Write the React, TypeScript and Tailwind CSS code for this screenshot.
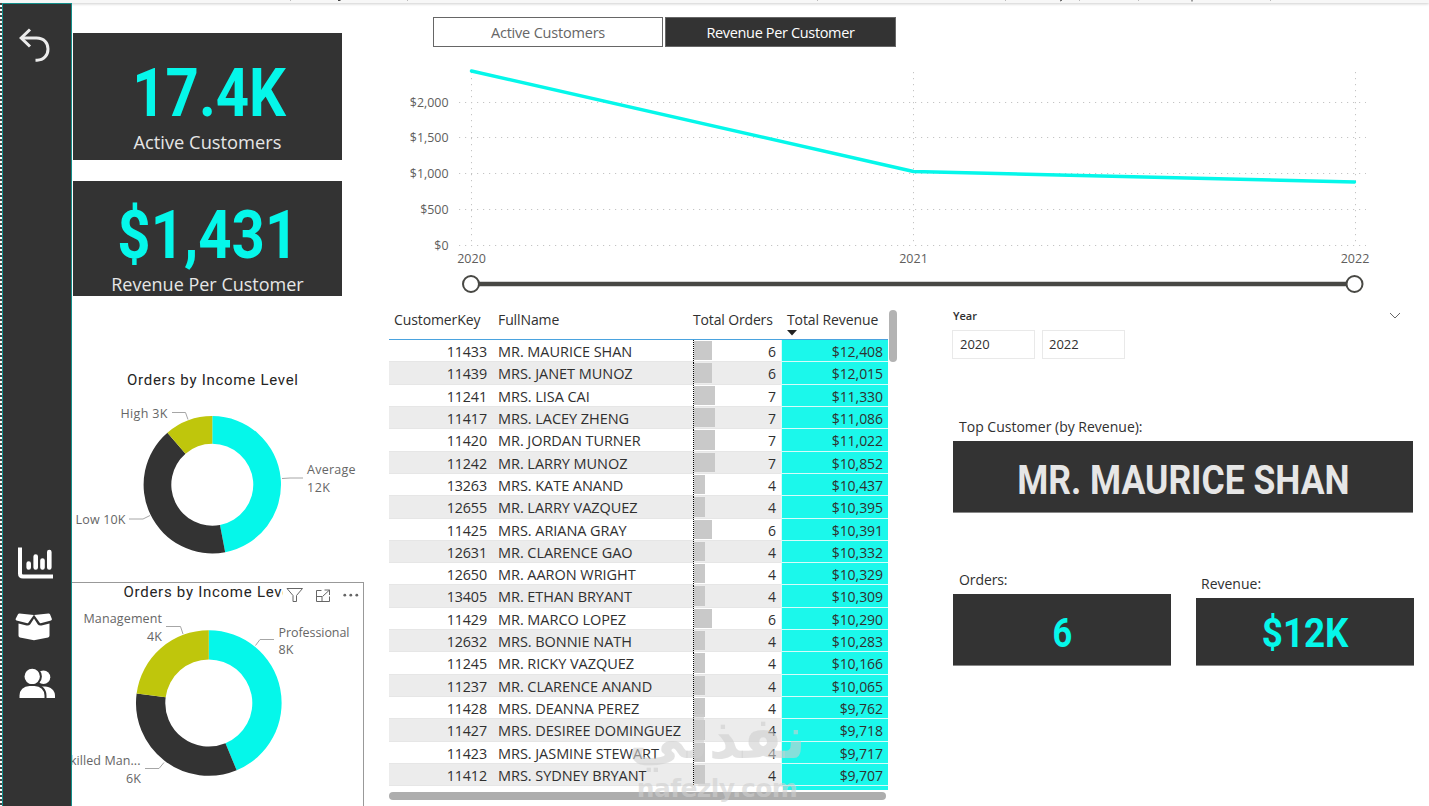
type Slice = { from: number; to: number; color: string };

const customers: [string, string, number, string][] = [
  ['11433', 'MR. MAURICE SHAN', 6, '$12,408'],
  ['11439', 'MRS. JANET MUNOZ', 6, '$12,015'],
  ['11241', 'MRS. LISA CAI', 7, '$11,330'],
  ['11417', 'MRS. LACEY ZHENG', 7, '$11,086'],
  ['11420', 'MR. JORDAN TURNER', 7, '$11,022'],
  ['11242', 'MR. LARRY MUNOZ', 7, '$10,852'],
  ['13263', 'MRS. KATE ANAND', 4, '$10,437'],
  ['12655', 'MR. LARRY VAZQUEZ', 4, '$10,395'],
  ['11425', 'MRS. ARIANA GRAY', 6, '$10,391'],
  ['12631', 'MR. CLARENCE GAO', 4, '$10,332'],
  ['12650', 'MR. AARON WRIGHT', 4, '$10,329'],
  ['13405', 'MR. ETHAN BRYANT', 4, '$10,309'],
  ['11429', 'MR. MARCO LOPEZ', 6, '$10,290'],
  ['12632', 'MRS. BONNIE NATH', 4, '$10,283'],
  ['11245', 'MR. RICKY VAZQUEZ', 4, '$10,166'],
  ['11237', 'MR. CLARENCE ANAND', 4, '$10,065'],
  ['11428', 'MRS. DEANNA PEREZ', 4, '$9,762'],
  ['11427', 'MRS. DESIREE DOMINGUEZ', 4, '$9,718'],
  ['11423', 'MRS. JASMINE STEWART', 4, '$9,717'],
  ['11412', 'MRS. SYDNEY BRYANT', 4, '$9,707'],
];

const barWidths: Record<number, string> = {
  4: 'w-[11px]',
  6: 'w-[18px]',
  7: 'w-[21px]',
};

const incomeSlices: Slice[] = [
  { from: 0, to: 169.2, color: '#05f7ea' },
  { from: 169.2, to: 319.2, color: '#333333' },
  { from: 319.2, to: 360, color: '#bfc60c' },
];

const occupationSlices: Slice[] = [
  { from: 0, to: 157.5, color: '#05f7ea' },
  { from: 157.5, to: 277.5, color: '#333333' },
  { from: 277.5, to: 360, color: '#bfc60c' },
];

function point(cx: number, cy: number, r: number, deg: number) {
  const a = (deg * Math.PI) / 180;
  return `${(cx + r * Math.sin(a)).toFixed(2)} ${(cy - r * Math.cos(a)).toFixed(2)}`;
}

function Donut({ cx, cy, r, hole, slices }: { cx: number; cy: number; r: number; hole: number; slices: Slice[] }) {
  return (
    <g>
      {slices.map((s) => {
        const large = s.to - s.from > 180 ? 1 : 0;
        return (
          <path
            key={s.from}
            fill={s.color}
            d={`M${point(cx, cy, r, s.from)} A${r} ${r} 0 ${large} 1 ${point(cx, cy, r, s.to)} L${point(cx, cy, hole, s.to)} A${hole} ${hole} 0 ${large} 0 ${point(cx, cy, hole, s.from)} Z`}
          />
        );
      })}
    </g>
  );
}

function Sidebar() {
  return (
    <aside className="flex w-[70px] shrink-0 flex-col border-x border-t border-[#138f8b] bg-[#333333]">
      <svg className="ml-[15px] mt-[22px] h-[38px] w-[36px]" viewBox="0 0 36 38" fill="none" stroke="#ececec" strokeWidth="3">
        <path d="M12 3.500 3.200 12l8.800 8.500" />
        <path d="M3.500 12h15c7.500 0 11.500 5 11.500 11s-4 11.200-11 11.200h-1.500" />
      </svg>
      <svg className="ml-[14px] mt-[483px] h-[34px] w-[38px]" viewBox="0 0 38 34" fill="none" stroke="#fff" strokeLinecap="round">
        <path strokeWidth="4" strokeLinecap="butt" strokeLinejoin="round" d="M3 .5V26.500q0 3 3 3H36" />
        <path strokeWidth="4.600" d="M11.700 16.500v4M18.700 9.500v11M25.500 13.500v7M32.300 5v15.500" />
      </svg>
      <svg className="ml-[11px] mt-[31px] h-[30px] w-[40px]" viewBox="0 0 40 30" fill="#fff">
        <path d="M5.500 1.500 19.800 3 14.500 10.500Q14 11.500 12.500 11L2.500 8.500Q1.200 8 1.700 6.800L4 2.300Q4.500 1.400 5.500 1.500Z" />
        <path d="M34.500 1.500 20.200 3l5.300 7.500q.5 1 2 .5l9.500-2.500q1.300-.5.800-1.700L36 2.300q-.5-.9-1.500-.8Z" />
        <path d="M4.500 11.500 12.500 13.500q2.500.5 3.800-1.300L20 6.500l3.700 5.700q1.300 1.800 3.800 1.300l8-2v12q0 1.400-1.400 1.900L20 28.300 5.900 25.400q-1.400-.5-1.400-1.900Z" />
      </svg>
      <svg className="ml-[15px] mt-[26px] h-[32px] w-[38px]" viewBox="0 0 38 32" fill="#fff">
        <circle cx="25.500" cy="9.300" r="6.800" />
        <path d="M22 18.500h5c5.500 0 10 4 10 9v2.500H22Z" />
        <g stroke="#333333" strokeWidth="2">
          <circle cx="14.200" cy="8.500" r="8.700" />
          <path d="M.5 31v-3.500c0-6 4.500-10.500 11-10.500h5c6.500 0 11 4.500 11 10.500V31Z" />
        </g>
      </svg>
    </aside>
  );
}

function IncomeChart() {
  return (
    <svg className="mt-[64px] h-[222px] w-[292px] shrink-0" viewBox="72 360 292 222" fontFamily="Open Sans, Noto Sans, sans-serif">
      <text x="127" y="385" fontSize="15" fontFamily="Roboto, sans-serif" fill="#252423" textLength="171">
        Orders by Income Level
      </text>
      <Donut cx={212.3} cy={484.7} r={68.7} hole={41} slices={incomeSlices} />
      <g fill="none" stroke="#a6a6a6">
        <path d="M172 412.500h13.500l2.500 7" />
        <path d="M282 478.500l8-.500h13" />
        <path d="M129 519h14l7-3.500" />
      </g>
      <g fontSize="12.500" fill="#666">
        <text x="120.500" y="418" textLength="47">High 3K</text>
        <text x="307" y="474" textLength="48.500">Average</text>
        <text x="307" y="492" textLength="23">12K</text>
        <text x="75.500" y="524" textLength="50">Low 10K</text>
      </g>
    </svg>
  );
}

function OccupationChart() {
  return (
    <div className="w-[292px] flex-1 border-r border-t border-[#999]">
      <svg className="h-[223px] w-[291px]" viewBox="72 583 291 223" fontFamily="Open Sans, Noto Sans, sans-serif">
        <clipPath id="title-clip">
          <rect x="100" y="583" width="183" height="24" />
        </clipPath>
        <text x="123.500" y="597" fontSize="15" fontFamily="Roboto, sans-serif" fill="#252423" textLength="171" clipPath="url(#title-clip)">
          Orders by Income Level
        </text>
        <g fill="none" stroke="#666" strokeWidth="1">
          <path d="M287 588.500h15.500l-6 7v6l-3.500 0v-6z" />
          <path d="M321.500 590.500h-5v11h13v-5M316.500 596.500h5.500v5M324.500 590h5v5M329.500 590l-7 6.500" />
        </g>
        <g fill="#666">
          <circle cx="344.800" cy="595.200" r="1.400" />
          <circle cx="350.800" cy="595.200" r="1.400" />
          <circle cx="356.800" cy="595.200" r="1.400" />
        </g>
        <Donut cx={208.8} cy={703} r={72.8} hole={43.5} slices={occupationSlices} />
        <g fill="none" stroke="#a6a6a6">
          <path d="M166 626.500h14.500l2.500 7.500" />
          <path d="M274 639.500h-14l-4.500 6" />
          <path d="M145 768.500h14l5-6" />
        </g>
        <g fontSize="12.500" fill="#666">
          <text x="83.500" y="623" textLength="78.500">Management</text>
          <text x="147" y="641" textLength="15">4K</text>
          <text x="278.500" y="637" textLength="71">Professional</text>
          <text x="278.500" y="654" textLength="15">8K</text>
          <text x="63" y="765" textLength="77.500">Skilled Man...</text>
          <text x="126" y="783" textLength="15">6K</text>
        </g>
      </svg>
    </div>
  );
}

function RevenueChart() {
  const gridRows = [
    { y: 102.5, label: '$2,000' },
    { y: 137.5, label: '$1,500' },
    { y: 173.5, label: '$1,000' },
    { y: 209.5, label: '$500' },
    { y: 245.5, label: '$0' },
  ];

  return (
    <svg className="h-[254px] w-[1000px]" viewBox="400 48 1000 254" fontFamily="Open Sans, Noto Sans, sans-serif" fontSize="12.400" fill="#605e5c">
      <g stroke="#c4c4c4" strokeDasharray="1.200 4.800">
        {gridRows.map((row) => (
          <path key={row.y} d={`M459 ${row.y}H1366`} />
        ))}
        <path d="M471.500 72V245M913.500 72V245M1355.500 72V245" />
      </g>
      {gridRows.map((row) => (
        <text key={row.label} x="448.500" y={row.y + 4.5} textAnchor="end">
          {row.label}
        </text>
      ))}
      <path d="M471.500 71 913.500 171.500 1354.500 182" fill="none" stroke="#05f7ea" strokeWidth="3.400" strokeLinecap="round" strokeLinejoin="round" />
      <g textAnchor="middle" fontSize="12.500">
        <text x="471.500" y="263">2020</text>
        <text x="913.500" y="263">2021</text>
        <text x="1355" y="263">2022</text>
      </g>
      <path d="M471 284H1354" stroke="#484844" strokeWidth="4.500" />
      <g fill="#fff" stroke="#484844" strokeWidth="2">
        <circle cx="471" cy="284" r="8" />
        <circle cx="1354.500" cy="284" r="8" />
      </g>
    </svg>
  );
}

function CustomerTable() {
  return (
    <section className="w-[509px] shrink-0 text-[14px] text-[#303030]">
      <div className="flex">
        <div className="w-[499px]">
          <div className="grid h-[38px] grid-cols-[103px_201px_88px_107px] border-b-[1.5px] border-[#4aa3df] pt-[8px] leading-[20px]">
            <div className="pl-[5px] tracking-[-0.1px]">CustomerKey</div>
            <div className="pl-[6px] tracking-[-0.1px]">FullName</div>
            <div className="whitespace-nowrap tracking-[-0.15px]">Total Orders</div>
            <div className="relative whitespace-nowrap pl-[6px] tracking-[-0.1px]">
              Total Revenue
              <svg className="absolute left-[6px] top-[20px] h-[6px] w-[10px]" viewBox="0 0 10 6" fill="#222">
                <path d="M0 0h10L5 5.500z" />
              </svg>
            </div>
          </div>
          {customers.map(([key, name, orders, revenue], i) => (
            <div
              key={key}
              className={`grid h-[22.32px] grid-cols-[103px_201px_88px_107px] border-b border-[#e6e6e6] leading-[18px] ${i % 2 ? 'bg-[#ececec]' : 'bg-white'}`}
            >
              <div className="pr-[5px] pt-[3px] text-right text-[14.3px] tracking-[-0.1px]">{key}</div>
              <div className="whitespace-nowrap pl-[6px] pt-[3px] text-[14.5px] tracking-[-0.05px]">{name}</div>
              <div className="flex justify-between border-l border-dotted border-black pr-[5px]">
                <div className={`my-px bg-[#c9c9c9] ${barWidths[orders]}`} />
                <span className="pt-[3px]">{orders}</span>
              </div>
              <div className="-mb-px border-b border-l border-[#d5fcf9] bg-[#1bf8eb] pr-[5px] pt-[3px] text-right tracking-[-0.05px]">
                {revenue}
              </div>
            </div>
          ))}
          <div className="ml-[394px] h-[4px] bg-[#1bf8eb]" />
        </div>
        <div className="ml-[1px] mt-[8px] h-[52px] w-[8px] rounded-full bg-[#b3b3b3]" />
      </div>
      <div className="mt-[2px] h-[8px] w-[497px] rounded-full bg-[#adadad]" />
    </section>
  );
}

function DetailPanel() {
  return (
    <section className="ml-[55px] w-[462px] text-[14px] text-[#303030]">
      <div className="flex items-center justify-between pt-[6px]">
        <h3 className="text-[11px] font-semibold leading-[16px]">Year</h3>
        <svg className="mr-[14px] h-[8px] w-[12px]" viewBox="0 0 12 8" fill="none" stroke="#666">
          <path d="M1 1l5 5 5-5" />
        </svg>
      </div>
      <div className="-ml-px mt-[6px] flex gap-[7px] text-[13px]">
        <button className="h-[29px] w-[83px] border border-[#e9e9e9] pl-[7px] pt-px text-left">2020</button>
        <button className="h-[29px] w-[83px] border border-[#e9e9e9] pl-[6px] pt-px text-left">2022</button>
      </div>
      <p className="mt-[58px] h-[24px] pl-[6px] leading-[20px]">Top Customer (by Revenue):</p>
      <div className="flex h-[72px] w-[460px] items-center justify-center border-b border-[#888] bg-[#333333] pt-[8px] font-[Roboto] text-[40px] font-bold leading-none text-[#e6e6e6]">
        <span className="inline-block scale-x-[0.887] whitespace-nowrap">MR. MAURICE SHAN</span>
      </div>
      <div className="mt-[57px] flex items-end gap-[25px]">
        <div>
          <p className="h-[24px] pl-[6px] leading-[20px] tracking-[-0.1px]">Orders:</p>
          <div className="flex h-[72px] w-[218px] items-center justify-center border-b border-[#888] bg-[#333333] pt-[8px] font-[Roboto] text-[40px] font-bold leading-none text-[#05f7ea]">
            <span className="inline-block scale-x-[0.86]">6</span>
          </div>
        </div>
        <div>
          <p className="h-[24px] pl-[5px] leading-[20px]">Revenue:</p>
          <div className="flex h-[68px] w-[218px] items-center justify-center border-b border-[#888] bg-[#333333] pt-[5px] font-[Roboto] text-[40px] font-bold leading-none text-[#05f7ea]">
            <span className="inline-block scale-x-[0.92]">$12K</span>
          </div>
        </div>
      </div>
    </section>
  );
}

export default function App() {
  return (
    <div className="relative flex h-[806px] w-[1429px] flex-col overflow-hidden bg-white font-['Open_Sans','Noto_Sans',sans-serif]">
      <div className="h-[3px] shrink-0 bg-[#f7f7f7] shadow-[0_1px_3px_rgba(0,0,0,0.2)]">
        <svg className="h-[3px] w-[1429px]" viewBox="0 0 1429 3" stroke="#bbb">
          <path d="M290.500 0v1M407.500 0v1M817.500 0v1M1005.500 0v1M1079.500 0v1M1138.500 0v1M1270.500 0v1" />
          <path stroke="#444" d="M338 .5h2.500M1060 1l2-1M1192 0v1.500" />
        </svg>
      </div>
      <div className="flex min-h-0 flex-1">
        <div className="w-[2px] shrink-0 bg-[repeating-linear-gradient(to_bottom,#444_0,#444_2px,#fff_2px,#fff_4px)]" />
        <Sidebar />

        <div className="flex w-[317px] shrink-0 flex-col">
          <div className="ml-[1px] mt-[30px] flex h-[127px] w-[269px] shrink-0 flex-col items-center bg-[#333333] pt-[28px]">
            <div className="scale-x-[0.88] pl-[3px] font-[Roboto] text-[66px] font-bold leading-[66px] text-[#05f7ea]">17.4K</div>
            <div className="mt-[1px] text-[18.3px] leading-[28px] text-[#e6e6e6]">Active Customers</div>
          </div>
          <div className="ml-[1px] mt-[21px] flex h-[115px] w-[269px] shrink-0 flex-col items-center overflow-hidden bg-[#333333] pt-[22px]">
            <div className="scale-x-[0.88] font-[Roboto] text-[66px] font-bold leading-[66px] text-[#05f7ea]">$1,431</div>
            <div className="mt-[1px] text-[18px] leading-[28px] text-[#e6e6e6]">Revenue Per Customer</div>
          </div>
          <IncomeChart />
          <OccupationChart />
        </div>

        <main className="flex flex-1 flex-col">
          <div className="ml-[44px] mt-[14px] flex h-[30px] gap-[2px] text-[14.5px] tracking-[-0.2px]">
            <button className="w-[230px] border border-[#666] pt-px text-[#666]">Active Customers</button>
            <button className="w-[231px] border border-[#666] bg-[#333333] pt-px tracking-[-0.35px] text-white">Revenue Per Customer</button>
          </div>
          <div className="ml-[11px] mt-px h-[254px]">
            <RevenueChart />
          </div>
          <div className="flex">
            <CustomerTable />
            <DetailPanel />
          </div>
        </main>
      </div>

      {/* Watermark */}
      <div className="absolute left-[632px] top-[703px] flex w-[170px] flex-col items-center whitespace-nowrap font-['DejaVu_Sans'] font-bold text-[#cfcfcf]/60">
        <span className="text-[58px] leading-[70px]" dir="rtl">نفذلي</span>
        <span className="text-[25px] leading-[32px] tracking-[-0.6px]">nafezly.com</span>
      </div>
    </div>
  );
}
